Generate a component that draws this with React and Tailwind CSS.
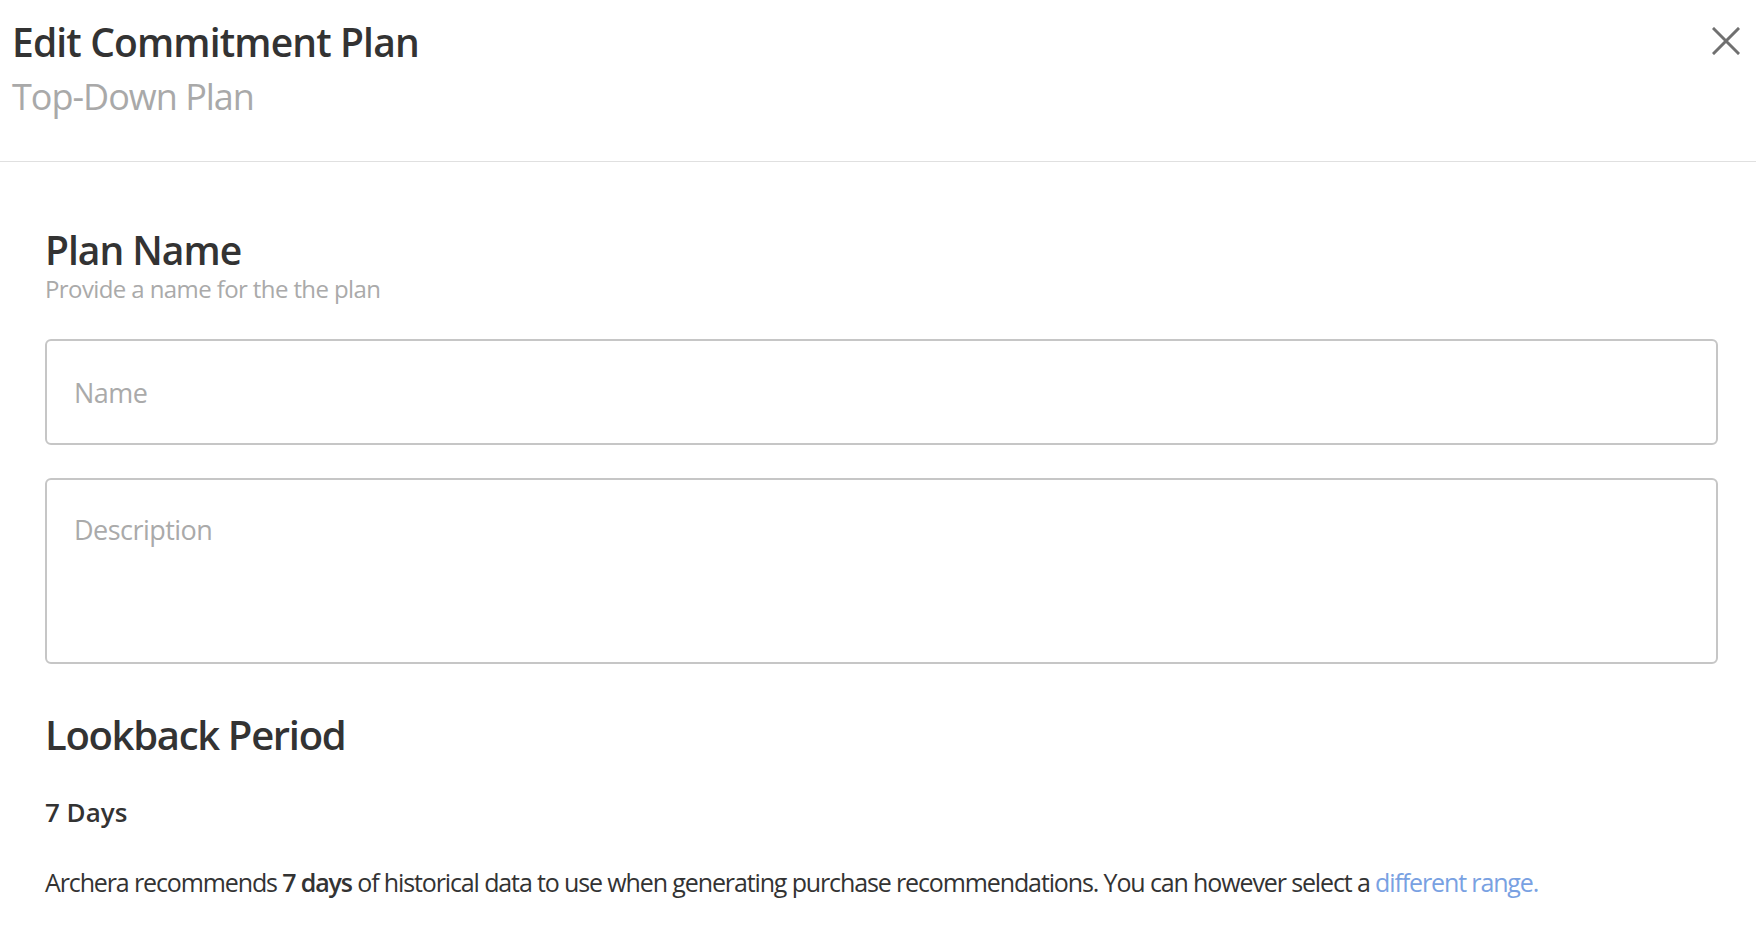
function CloseIcon() {
  return (
    <svg width="28" height="28" viewBox="0 0 28 28" fill="none">
      <path d="M2 2 L26 26 M26 2 L2 26" stroke="#707070" strokeWidth="3" strokeLinecap="square" />
    </svg>
  );
}

function App() {
  return (
    <div className="min-h-screen bg-white font-['Open_Sans',sans-serif] text-[#333]">
      {/* header */}
      <div className="flex items-start justify-between border-b border-[#e0e0e0] pl-[12px] pr-[16px] pt-[22px] pb-[46px]">
        <div>
          <h1 className="text-[39px] leading-none font-semibold tracking-[-0.022em]">Edit Commitment Plan</h1>
          <h2 className="mt-[18px] text-[36px] leading-none text-[#a9a9a9] tracking-[-0.028em]">Top-Down Plan</h2>
        </div>
        <button className="mt-[5px] p-0">
          <CloseIcon />
        </button>
      </div>

      {/* body */}
      <div className="pl-[45px] pr-[38px]">
        <h3 className="mt-[68px] text-[39px] leading-none font-semibold tracking-[-0.026em]">Plan Name</h3>
        <p className="mt-[8px] text-[24px] leading-none text-[#aaa] tracking-[-0.025em]">Provide a name for the the plan</p>

        <input
          type="text"
          placeholder="Name"
          className="mt-[38px] block h-[106px] w-full rounded-[6px] border-2 border-[#c6c6c6] px-[27px] text-[27px] tracking-[-0.02em] placeholder:text-[#aaa] outline-none"
        />
        <textarea
          placeholder="Description"
          className="mt-[33px] block h-[186px] w-full resize-none rounded-[6px] border-2 border-[#c6c6c6] px-[27px] pt-[36px] text-[27px] leading-none tracking-[-0.02em] placeholder:text-[#aaa] outline-none"
        />

        <h3 className="mt-[51px] text-[40px] leading-none font-semibold tracking-[-0.033em]">Lookback Period</h3>
        <div className="mt-[44px] text-[26px] leading-none font-semibold">7 Days</div>
        <p className="mt-[45px] text-[25px] leading-none tracking-[-0.045em]">
          Archera recommends <strong className="font-semibold">7 days</strong> of historical data to use when
          generating purchase recommendations. You can however select a{" "}
          <a className="text-[#79a1e2]">different range.</a>
        </p>
      </div>
    </div>
  );
}

export default App;
